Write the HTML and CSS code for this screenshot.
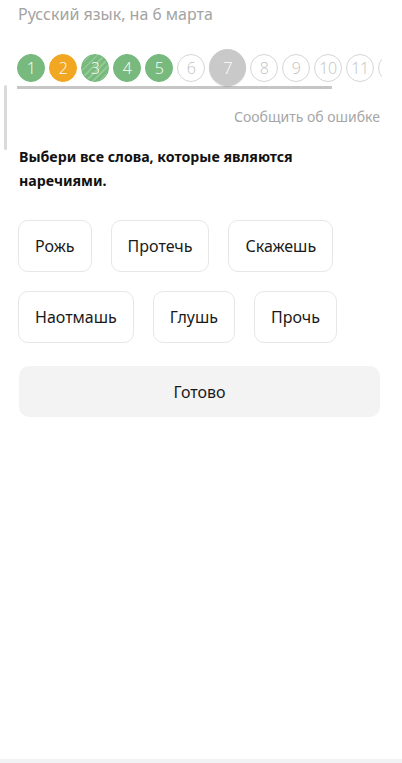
FILE: index.html
```html
<!DOCTYPE html>
<html lang="ru">
<head>
    <meta charset="UTF-8">
    <meta name="viewport" content="width=device-width, initial-scale=1.0">
    <title>Русский язык, на 6 марта</title>
    <link rel="stylesheet" href="styles.css">
</head>
<body>
    <div class="page">
        <h1 class="title">Русский язык, на 6 марта</h1>

        <div class="steps">
            <div class="steps-row">
                <span class="step done">1</span>
                <span class="step wrong">2</span>
                <span class="step done striped">3</span>
                <span class="step done">4</span>
                <span class="step done">5</span>
                <span class="step">6</span>
                <span class="step current">7</span>
                <span class="step">8</span>
                <span class="step">9</span>
                <span class="step">10</span>
                <span class="step">11</span>
                <span class="step"></span>
            </div>
            <div class="steps-bar"></div>
        </div>
        <div class="scroll-mark"></div>

        <a class="report" href="#">Сообщить об ошибке</a>

        <p class="question">Выбери все слова, которые являются наречиями.</p>

        <div class="options">
            <button class="option">Рожь</button>
            <button class="option">Протечь</button>
            <button class="option">Скажешь</button>
            <button class="option">Наотмашь</button>
            <button class="option">Глушь</button>
            <button class="option">Прочь</button>
        </div>

        <button class="submit">Готово</button>
    </div>
    <div class="bottom-strip"></div>
</body>
</html>
```

FILE: styles.css
```css
body {
    margin: 0;
    padding: 0;
    font-family: "Noto Sans", "Open Sans", sans-serif;
    background: #ffffff;
    color: #1a1a1a;
    height: 763px;
    overflow: hidden;
    position: relative;
}
.page {
    padding: 0 22px 0 18px;
}
.title {
    margin: 0;
    padding-top: 3px;
    font-size: 16px;
    line-height: 22px;
    font-weight: 400;
    color: #a3a3a3;
}
.steps {
    margin-top: 24px;
    margin-left: -1px;
    width: 365px;
    overflow: hidden;
}
.steps-row {
    display: flex;
    align-items: center;
    gap: 4px;
    height: 37px;
}
.step {
    flex: 0 0 auto;
    width: 28px;
    height: 28px;
    box-sizing: border-box;
    border-radius: 50%;
    border: 1px solid #d6d6d6;
    display: flex;
    align-items: center;
    justify-content: center;
    font-family: "Open Sans", sans-serif;
    font-weight: 300;
    font-size: 16px;
    color: #c2c2c2;
    letter-spacing: -0.5px;
}
.step.done {
    background: #78b97e;
    border-color: #78b97e;
    color: #ffffff;
}
.step.striped {
    background: repeating-linear-gradient(135deg, #92c796 0 2px, #78b97e 2px 5px);
}
.step.wrong {
    background: #f2a723;
    border-color: #f2a723;
    color: #ffffff;
}
.step.current {
    width: 37px;
    height: 37px;
    background: #c9c9c9;
    border-color: #c9c9c9;
    color: #ffffff;
    font-size: 17px;
    box-shadow: 0 1px 1px rgba(0, 0, 0, 0.12);
}
.steps-bar {
    width: 315px;
    height: 3px;
    background: #c6c6c6;
}
.scroll-mark {
    position: absolute;
    left: 4px;
    top: 85px;
    width: 3px;
    height: 65px;
    border-radius: 2px;
    background: #dadada;
}
.report {
    display: block;
    margin-top: 18px;
    text-align: right;
    font-size: 14px;
    line-height: 20px;
    color: #a6a6a6;
    text-decoration: none;
}
.question {
    margin: 18px 0 0 1px;
    font-size: 14.2px;
    line-height: 24px;
    font-weight: 700;
    color: #111111;
    max-width: 300px;
}
.options {
    display: flex;
    flex-wrap: wrap;
    gap: 19px;
    margin-top: 27px;
    max-width: 330px;
}
.option {
    height: 52px;
    padding: 0 16px;
    border: 1px solid #e7e7e7;
    border-radius: 10px;
    background: #ffffff;
    font-family: "Noto Sans", "Open Sans", sans-serif;
    font-size: 16px;
    color: #1a1a1a;
}
.submit {
    display: block;
    width: 361px;
    height: 51px;
    margin: 23px 0 0 1px;
    border: none;
    border-radius: 10px;
    background: #f3f3f3;
    font-family: "Noto Sans", "Open Sans", sans-serif;
    font-size: 16px;
    color: #1a1a1a;
}
.bottom-strip {
    position: absolute;
    left: 0;
    right: 0;
    bottom: 0;
    height: 4px;
    background: #f1f3f5;
}
```
